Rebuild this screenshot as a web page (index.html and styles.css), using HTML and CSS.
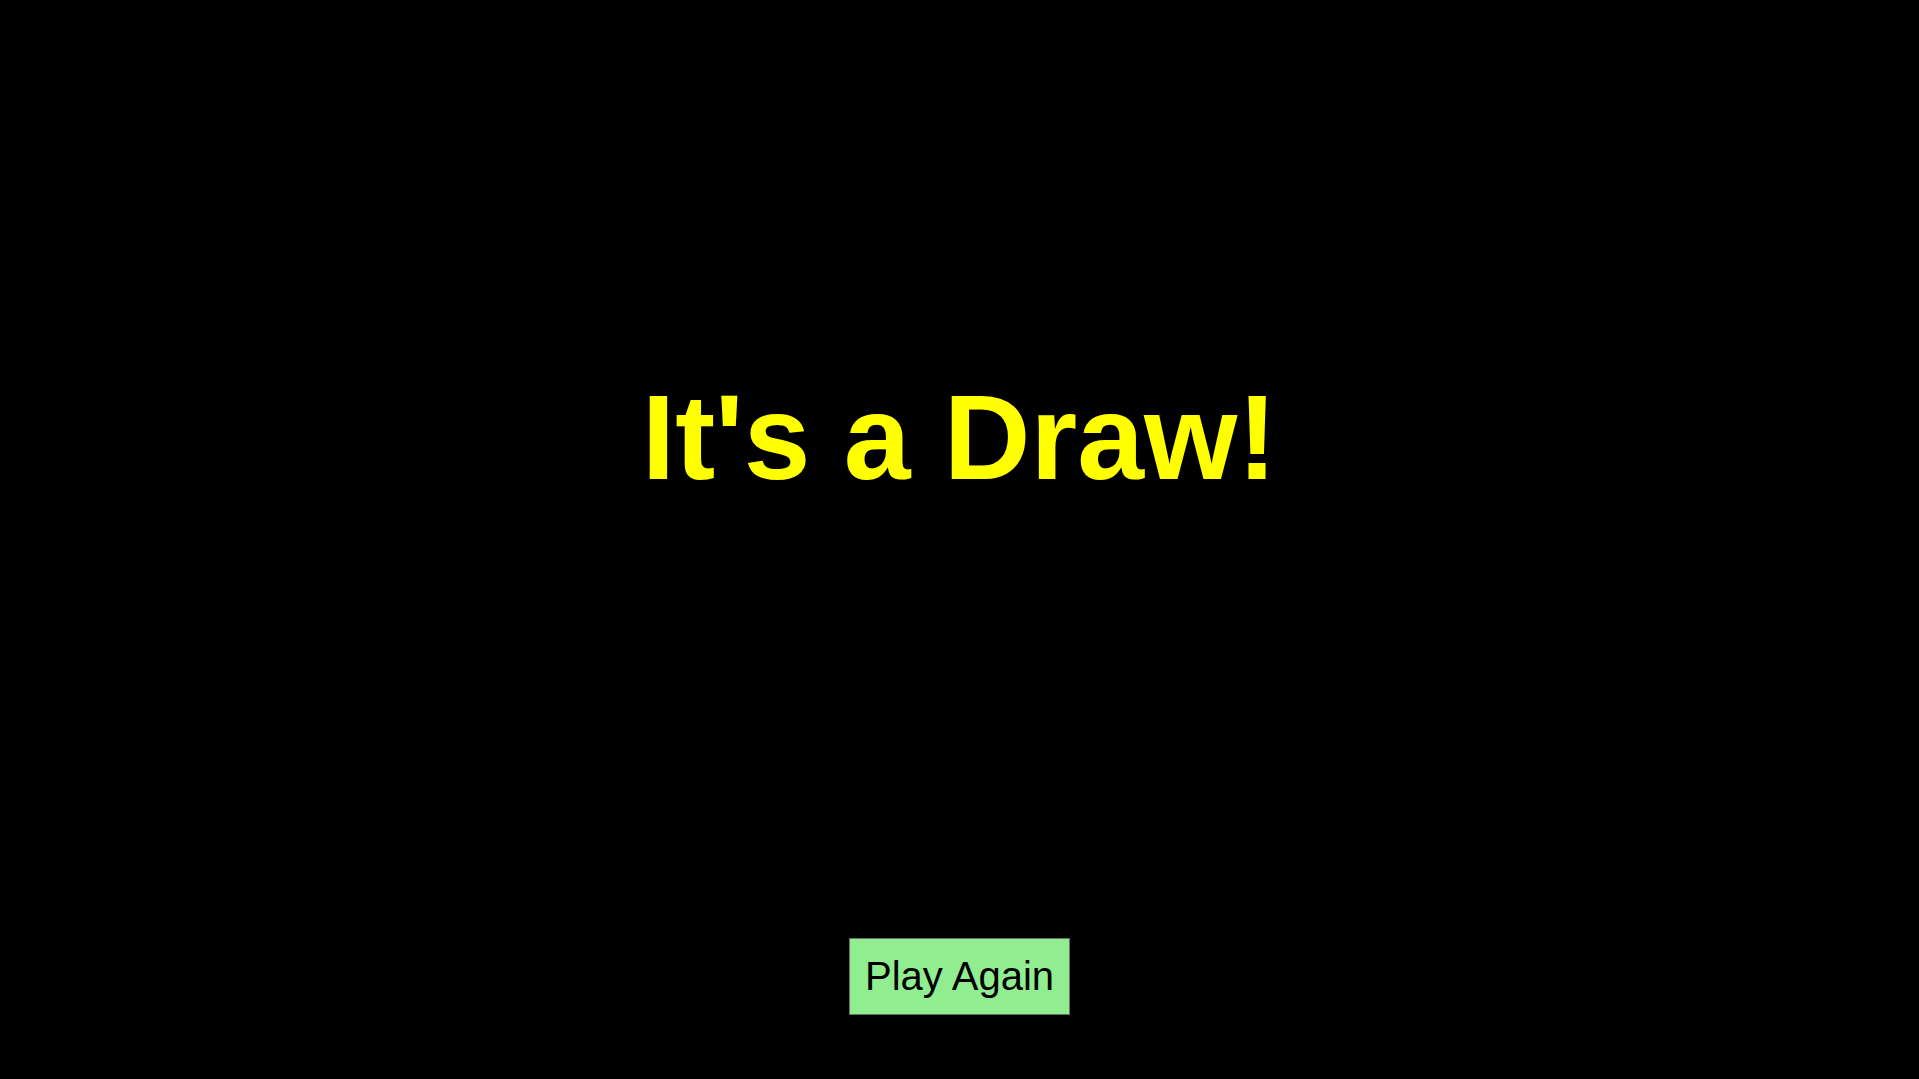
FILE: index.html
```html
<!DOCTYPE html>
<html lang="en">
<head>
<meta charset="utf-8">
<title>It's a Draw!</title>
<link rel="stylesheet" href="styles.css">
</head>
<body>
<main class="screen">
  <h1 class="result">It's a Draw!</h1>
  <button class="play-again" type="button">Play Again</button>
</main>
</body>
</html>
```

FILE: styles.css
```css
html, body {
  margin: 0;
  padding: 0;
  background: #000000;
  height: 100%;
}

.screen {
  display: flex;
  flex-direction: column;
  align-items: center;
  padding-top: 368px;
  font-family: "Liberation Sans", Arial, sans-serif;
}

.result {
  margin: 0;
  font-size: 120px;
  font-weight: bold;
  color: #ffff00;
  line-height: normal;
}

.play-again {
  margin-top: 432px;
  font-family: "Liberation Sans", Arial, sans-serif;
  font-size: 40px;
  line-height: normal;
  padding: 15px 15px;
  background: #90ee90;
  color: #000000;
  border: 1px solid #6a6a6a;
  border-radius: 0;
  cursor: pointer;
}
```
